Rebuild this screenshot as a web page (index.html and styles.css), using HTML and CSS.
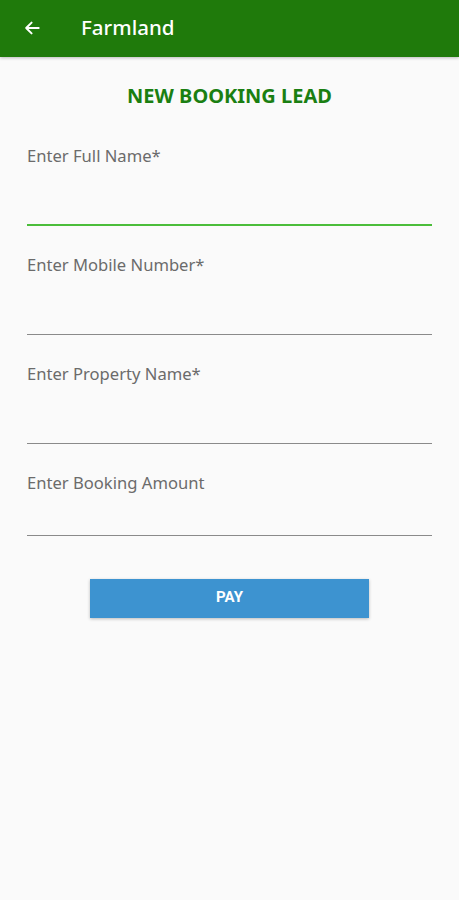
FILE: index.html
```html
<!DOCTYPE html>
<html>
<head>
<meta charset="utf-8">
<link rel="stylesheet" href="styles.css">
</head>
<body>
<header class="appbar">
  <svg class="back" width="20" height="20" viewBox="0 0 24 24"><path d="M20 12H5M11.5 5.5L5 12l6.5 6.5" fill="none" stroke="#fff" stroke-width="2.4" stroke-linecap="round" stroke-linejoin="round"/></svg>
  <span class="appbar-title">Farmland</span>
</header>
<main class="content">
  <h1 class="title">NEW BOOKING LEAD</h1>
  <form class="form">
    <div class="field">
      <label class="label">Enter Full Name*</label>
      <div class="input focused"></div>
    </div>
    <div class="field">
      <label class="label">Enter Mobile Number*</label>
      <div class="input"></div>
    </div>
    <div class="field">
      <label class="label">Enter Property Name*</label>
      <div class="input"></div>
    </div>
    <div class="field last">
      <label class="label">Enter Booking Amount</label>
      <div class="input short"></div>
    </div>
    <div class="actions">
      <button type="button" class="pay">PAY</button>
    </div>
  </form>
</main>
</body>
</html>
```
FILE: styles.css
```css
* { box-sizing: border-box; }
html, body { margin: 0; padding: 0; }
body {
  background: #fafafa;
  font-family: "Noto Sans", "Open Sans", sans-serif;
  width: 459px;
  height: 900px;
}
.appbar {
  height: 57px;
  background: #1f7a0b;
  display: flex;
  align-items: center;
  padding-left: 22px;
  box-shadow: 0 1px 3px rgba(0,0,0,0.25);
}
.back { display: block; margin-top: -2px; }
.appbar-title {
  color: #fff;
  font-size: 20.5px;
  font-weight: 500;
  margin-left: 39px;
  margin-top: -4px;
}
.content { padding: 0 27px; }
.title {
  margin: 26px 0 0;
  text-align: center;
  color: #1a7f12;
  font-size: 20px;
  font-weight: 700;
  line-height: 26px;
}
.form { margin-top: 36px; display: flex; flex-direction: column; }
.field { display: flex; flex-direction: column; margin-bottom: 28px; }
.field.last { margin-bottom: 0; }
.label {
  color: #6b6b6b;
  font-size: 16.6px;
  line-height: 22px;
}
.input {
  height: 59px;
  border-bottom: 1.5px solid #8a8a8a;
}
.input.focused { border-bottom: 2px solid #4bbd3a; }
.input.short { height: 42px; }
.actions { display: flex; justify-content: center; margin-top: 43px; }
.pay {
  width: 279px;
  height: 39px;
  background: #3d93d0;
  border: none;
  color: #fff;
  font-family: "Roboto", sans-serif;
  font-weight: 700;
  font-size: 15px;
  box-shadow: 0 1px 3px rgba(0,0,0,0.25);
  padding: 0 0 4px;
}
```
